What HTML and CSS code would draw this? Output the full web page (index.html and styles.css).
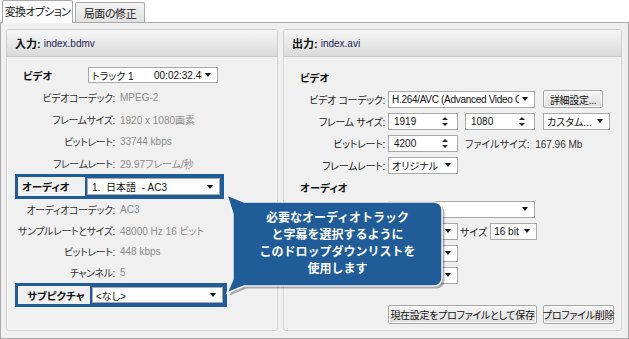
FILE: index.html
```html
<!DOCTYPE html>
<html lang="ja">
<head>
<meta charset="utf-8">
<title>変換オプション</title>
<link rel="stylesheet" href="styles.css">
</head>
<body>
<div class="tabs">
  <div class="tab active">変換オプション</div>
  <div class="tab">局面の修正</div>
</div>
<div class="tabpanel">
  <section class="panel left">
    <div class="ph"><b>入力:</b><span class="fn">index.bdmv</span></div>
    <div class="pb">
      <div class="row"><span class="hd">ビデオ</span><div class="sel trk"><span class="t1">トラック 1</span><span class="tm">00:02:32.48</span><i class="arr"></i></div></div>
      <div class="row"><span class="lb">ビデオコーデック:</span><span class="vl">MPEG-2</span></div>
      <div class="row"><span class="lb">フレームサイズ:</span><span class="vl">1920 x 1080画素</span></div>
      <div class="row"><span class="lb">ビットレート:</span><span class="vl">33744 kbps</span></div>
      <div class="row"><span class="lb">フレームレート:</span><span class="vl">29.97フレーム/秒</span></div>
      <div class="hl audio"><span class="hlb">オーディオ</span><div class="sel">1.&nbsp; 日本語 &nbsp;- AC3<i class="arr"></i></div></div>
      <div class="row r21"><span class="lb">オーディオコーデック:</span><span class="vl">AC3</span></div>
      <div class="row r21"><span class="lb">サンプルレートとサイズ:</span><span class="vl">48000 Hz 16 ビット</span></div>
      <div class="row r21"><span class="lb">ビットレート:</span><span class="vl">448 kbps</span></div>
      <div class="row r21"><span class="lb">チャンネル:</span><span class="vl">5</span></div>
      <div class="hl sub"><span class="hlb">サブピクチャ</span><div class="sel">&lt;なし&gt;<i class="arr"></i></div></div>
    </div>
  </section>
  <section class="panel right">
    <div class="ph"><b>出力:</b><span class="fn">index.avi</span></div>
    <div class="pb">
      <div class="row"><span class="hd">ビデオ</span></div>
      <div class="row"><span class="rl">ビデオ コーデック:</span><div class="sel w147"><span class="clip">H.264/AVC (Advanced Video C</span><i class="arr"></i></div><div class="btn w60">詳細設定...</div></div>
      <div class="row"><span class="rl">フレーム サイズ:</span><div class="spin">1919<i class="sp"></i></div><div class="spin g7">1080<i class="sp"></i></div><div class="sel w67 g8">カスタム...<i class="arr"></i></div></div>
      <div class="row"><span class="rl">ビットレート:</span><div class="spin">4200<i class="sp"></i></div><span class="fs">ファイルサイズ:&nbsp; 167.96 Mb</span></div>
      <div class="row"><span class="rl">フレームレート:</span><div class="sel w70">オリジナル<i class="arr"></i></div></div>
      <div class="row"><span class="hd">オーディオ</span></div>
      <div class="row"><span class="rl"></span><div class="sel w147"><i class="arr"></i></div></div>
      <div class="row"><span class="rl"></span><div class="sel w70"><i class="arr"></i></div><span class="sz">サイズ</span><div class="sel w47">16 bit<i class="arr"></i></div></div>
      <div class="row"><span class="rl"></span><div class="sel w70"><i class="arr"></i></div></div>
      <div class="row"><span class="rl"></span><div class="sel w70"><i class="arr"></i></div></div>
      <div class="btnrow"><div class="btn w149">現在設定をプロファイルとして保存</div><div class="btn w71">プロファイル削除</div></div>
    </div>
  </section>
</div>
<div class="callout">
  <svg width="228" height="110" viewBox="0 0 228 110">
    <path class="shadow" d="M2 3 L19 10 H209 A8 8 0 0 1 217 18 V86 A8 8 0 0 1 209 94 H19 L2 101 L8 87 V22 Z" transform="translate(2.5 2.5)"/>
    <path class="bubble" d="M2 3 L19 10 H209 A8 8 0 0 1 217 18 V86 A8 8 0 0 1 209 94 H19 L2 101 L8 87 V22 Z"/>
  </svg>
  <p class="ctext">必要なオーディオトラック<br>と字幕を選択するように<br>このドロップダウンリストを<br>使用します</p>
</div>
</body>
</html>
```
FILE: styles.css
```css
* { box-sizing: border-box; }
html, body { margin: 0; padding: 0; }
body {
  width: 629px; height: 339px; overflow: hidden; position: relative;
  background: #fff; color: #222;
  font-family: "Liberation Sans", "Noto Sans CJK JP", sans-serif;
  font-size: 10px;
  font-feature-settings: "palt";
}
.tabs { display: flex; align-items: flex-end; height: 22px; padding-left: 2px; gap: 2px; position: relative; z-index: 2; }
.tab {
  height: 20px; width: 70px; display: flex; align-items: center; justify-content: center;
  border: 1px solid #a9a9a9; border-bottom: none; border-radius: 2px 2px 0 0;
  background: linear-gradient(#f4f4f4, #e1e1e1); font-size: 11px; color: #222; white-space: nowrap;
  letter-spacing: -0.4px;
}
.tab.active { height: 23px; width: 71px; margin-bottom: -1px; background: #fbfbfb; padding-bottom: 2px; letter-spacing: -0.7px; }
.tabpanel {
  height: 317px; border: 1px solid #a9a9a9; background: #f0f0f0;
  padding: 6px 6px 7px 5px; display: flex; gap: 5px;
}
.panel {
  height: 302px; border: 1px solid #cdcdcd; border-radius: 3px; background: #f0f0f0;
  display: flex; flex-direction: column; box-shadow: inset 0 0 0 1px #fafafa;
}
.left { width: 272px; }
.right { width: 339px; }
.ph {
  height: 27px; flex: none; border-bottom: 1px solid #c8c8c8; border-radius: 2px 2px 0 0;
  background: linear-gradient(#f7f7f7, #dadada); padding-left: 8px;
  display: flex; align-items: center; gap: 3px;
}
.ph b { font-size: 11px; color: #111; }
.ph .fn { color: #1d2550; }
.pb { flex: 1; display: flex; flex-direction: column; }
.left .pb { padding-top: 7px; }
.right .pb { padding-top: 9px; padding-bottom: 6px; }
.row { height: 22px; flex: none; display: flex; align-items: center; white-space: nowrap; }
.row.r21 { height: 21px; }
.hd { font-weight: bold; padding-left: 16px; color: #111; font-size: 10.5px; }
.left .hd { width: 81px; }
.lb { width: 108px; text-align: right; color: #333; letter-spacing: -0.4px; }
.vl { margin-left: 5px; color: #8c8c8c; }

.sel {
  position: relative; height: 17px; background: #fff; border: 1px solid #a9a9a9;
  padding-left: 3px; display: flex; align-items: center; white-space: nowrap; overflow: hidden; color: #111;
}
.clip { letter-spacing: -0.3px; }
.arr {
  position: absolute; right: 0; top: 0; bottom: 0; width: 15px; background: #fff;
}
.arr::after {
  content: ""; position: absolute; left: 3px; top: 50%; margin-top: -2px;
  border-left: 3.5px solid transparent; border-right: 3.5px solid transparent; border-top: 4px solid #111;
}
.trk { width: 130px; height: 16px; }
.trk .t1 { width: 62px; }

.hl { display: flex; flex: none; gap: 2px; border: 3px solid #1f5c98; background: #1f5c98; margin-left: 8px; }
.hlb { background: #f0f0f0; font-weight: bold; display: flex; align-items: center; color: #111; font-size: 10.5px; }
.hl .sel { flex: 1; margin: 1px 1px 1px 0; height: auto; }
.audio { width: 209px; height: 25px; }
.audio .hlb { width: 67px; padding-left: 4px; }
.audio .sel { padding-left: 4px; }
.sub { width: 212px; height: 24px; }
.sub .hlb { width: 72px; padding-left: 9px; }

.rl { width: 101px; margin-right: 3px; text-align: right; color: #222; letter-spacing: -0.3px; }
.w147 { width: 147px; }
.w70 { width: 70px; }
.w67 { width: 67px; }
.w47 { width: 47px; }
.g7 { margin-left: 7px; }
.g8 { margin-left: 8px; }
.spin {
  position: relative; width: 70px; height: 17px; background: #fff; border: 1px solid #a9a9a9;
  padding-left: 5px; display: flex; align-items: center; color: #111;
}
.sp { position: absolute; right: 8px; top: 3px; width: 7px; height: 9px; }
.sp::before, .sp::after {
  content: ""; position: absolute; left: 0;
  border-left: 3.5px solid transparent; border-right: 3.5px solid transparent;
}
.sp::before { top: 0; border-bottom: 3px solid #222; }
.sp::after { bottom: 0; border-top: 3px solid #222; }
.fs { margin-left: 7px; color: #333; }
.sz { margin: 0 3px 0 2px; color: #222; }
.btn {
  height: 18px; border: 1px solid #a6a6a6; border-radius: 2px;
  background: linear-gradient(#f6f6f6, #dedede); display: flex; align-items: center; justify-content: center;
  color: #111; white-space: nowrap; box-shadow: inset 0 0 0 1px #fcfcfc; letter-spacing: -0.3px;
}
.w60 { width: 60px; margin-left: 8px; }
.btnrow { margin-top: auto; display: flex; gap: 6px; padding-left: 104px; }
.btnrow .btn { height: 19px; }
.w149 { width: 149px; }
.w71 { width: 71px; }

.callout { position: absolute; left: 225px; top: 192px; width: 228px; height: 110px; z-index: 5; }
.callout svg { display: block; }
.shadow { fill: rgba(0, 0, 0, 0.3); }
.bubble { fill: #1f5c98; stroke: #f4f4f4; stroke-width: 1.5; }
.ctext {
  position: absolute; margin: 0; left: 8px; top: 16px; width: 209px;
  text-align: center; color: #fff; font-weight: bold; font-size: 12px; line-height: 17px;
  font-family: "Noto Sans CJK JP", sans-serif; font-feature-settings: normal;
}
```
